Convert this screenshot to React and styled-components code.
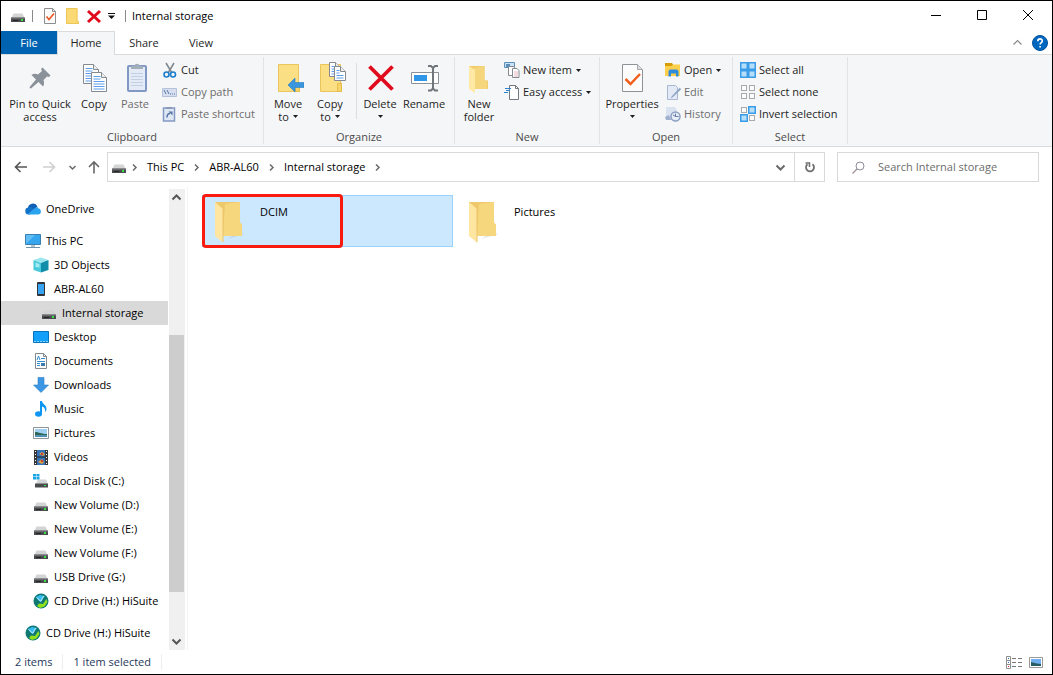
import React from "react";
import styled, { createGlobalStyle } from "styled-components";

const GlobalStyle = createGlobalStyle`
  * { box-sizing: border-box; }
  body { margin: 0; background: #fff; }
  body, button, input {
    font-family: "Open Sans", "Noto Sans", sans-serif;
    font-size: 12px;
    line-height: 16px;
    color: #000;
  }
  button { border: 0; padding: 0; background: none; white-space: nowrap; }
  ul { list-style: none; margin: 0; padding: 0; }
  svg { display: block; flex: none; }
`;

/* ---------- window frame ---------- */

const Window = styled.div`
  display: flex;
  flex-direction: column;
  min-height: 100vh;
  border: 1px solid #000;
  background: #fff;
`;

const TitleBar = styled.header`
  display: flex;
  align-items: center;
  height: 30px;
  padding: 0 1px 0 9px;
`;

const QuickButton = styled.button`
  display: flex;
  align-items: center;
  justify-content: center;
  width: ${(p) => (p.$narrow ? 14 : 22)}px;
  height: 22px;
`;

const Bar = styled.span`
  width: 1px;
  height: 12px;
  margin: 0 6px;
  background: #8a8a8a;
`;

const Title = styled.h1`
  flex: 1;
  margin: 0;
  font-size: 11px;
  font-weight: 400;
`;

const CaptionButton = styled.button`
  display: flex;
  align-items: center;
  justify-content: center;
  align-self: flex-start;
  width: 46px;
  height: 28px;
`;

const TabStrip = styled.nav`
  display: flex;
  height: 23px;
`;

const Tab = styled.button`
  width: ${(p) => (p.$wide ? 58 : 56)}px;
  height: ${(p) => (p.$active ? 24 : 23)}px;
  padding-bottom: ${(p) => (p.$active ? 2 : 0)}px;
  font-size: 11px;
  color: ${(p) => (p.$file ? "#fff" : "#262626")};
  background: ${(p) => (p.$file ? "#0063b1" : p.$active ? "#f5f6f7" : "transparent")};
  border: ${(p) => (p.$active ? "1px solid #dadbdc" : "0")};
  border-bottom: 0;
  position: relative;
`;

const TabTools = styled.div`
  display: flex;
  align-items: center;
  gap: 7px;
  margin-left: auto;
  padding-right: 4px;
`;

/* ---------- ribbon ---------- */

const Ribbon = styled.div`
  display: flex;
  height: 93px;
  background: #f5f6f7;
  border-top: 1px solid #dadbdc;
  border-bottom: 1px solid #dadbdc;
  padding: 2px 0;
`;

const Group = styled.section`
  display: flex;
  flex-direction: column;
  flex: none;
  width: ${(p) => p.$width}px;
  border-right: 1px solid #e2e3e4;
`;

const GroupBody = styled.div`
  display: flex;
  flex: 1;
  padding: 2px 0 0 3px;
`;

const GroupLabel = styled.h2`
  margin: 0;
  text-align: center;
  font-size: 11px;
  line-height: 14px;
  font-weight: 400;
  color: #4c4c4c;
`;

const BigButton = styled.button`
  display: flex;
  flex-direction: column;
  align-items: center;
  justify-content: flex-start;
  width: ${(p) => p.$width || 42}px;
  padding-top: 3px;
  font-size: 11px;
  line-height: 13px;
  color: ${(p) => (p.disabled ? "#6d6d6d" : "#1e1e1e")};
  svg + span { margin-top: 3px; }
`;

const Line = styled.span`
  display: flex;
  align-items: center;
  justify-content: center;
  gap: 4px;
  height: 13px;
`;

const SmallColumn = styled.div`
  display: flex;
  flex-direction: column;
`;

const SmallButton = styled.button`
  display: flex;
  align-items: center;
  gap: 3px;
  height: 22px;
  padding: 0 4px;
  font-size: 11px;
  color: ${(p) => (p.disabled ? "#6d6d6d" : "#1e1e1e")};
`;

const Divider = styled.span`
  width: 1px;
  height: 56px;
  margin: 4px 2px 0 5px;
  background: #dcdddf;
`;

/* ---------- address row ---------- */

const AddressRow = styled.div`
  display: flex;
  align-items: center;
  height: 40px;
  padding: 0 13px 0 6px;
`;

const NavButton = styled.button`
  display: flex;
  align-items: center;
  justify-content: center;
  width: ${(p) => p.$width || 28}px;
  height: 30px;
`;

const AddressBox = styled.div`
  display: flex;
  align-items: center;
  flex: 1;
  height: 30px;
  padding-left: 3px;
  border: 1px solid #d9d9d9;
`;

const Crumb = styled.button`
  padding: 0 5px;
  font-size: 11px;
`;

const Spacer = styled.span`
  flex: 1;
`;

const RefreshButton = styled(NavButton)`
  width: 30px;
  height: 28px;
  border-left: 1px solid #d9d9d9;
`;

const SearchBox = styled.label`
  display: flex;
  align-items: center;
  gap: 13px;
  flex: 0 1 202px;
  min-width: 0;
  height: 30px;
  margin-left: 12px;
  padding-left: 14px;
  border: 1px solid #d9d9d9;
`;

const SearchInput = styled.input`
  flex: 1;
  min-width: 0;
  border: 0;
  padding: 0;
  outline: 0;
  font-size: 11px;
  background: transparent;
  &::placeholder { color: #6d6d6d; opacity: 1; }
`;

/* ---------- body ---------- */

const Body = styled.div`
  display: flex;
  flex: 1;
`;

const Sidebar = styled.nav`
  width: 167px;
  padding: 10px 0 5px;
`;

const TreeItem = styled.li`
  margin-top: ${(p) => (p.$spaced ? 8 : 0)}px;
`;

const TreeLink = styled.a`
  display: flex;
  align-items: center;
  gap: 5px;
  height: 24px;
  padding-left: ${(p) => 24 + p.$depth * 8}px;
  font-size: 11px;
  white-space: nowrap;
  color: #000;
  text-decoration: none;
  background: ${(p) => (p.$selected ? "#d9d9d9" : "transparent")};
`;

const Scrollbar = styled.div`
  display: flex;
  flex-direction: column;
  width: 16px;
  margin: 2px 2px 0 1px;
  background: #f0f0f0;
`;

const ScrollButton = styled.button`
  display: flex;
  align-items: center;
  justify-content: center;
  height: 17px;
  padding-right: 1px;
`;

const Track = styled.div`
  flex: ${(p) => p.$share};
  margin-right: 1px;
  background: ${(p) => (p.$thumb ? "#cdcdcd" : "transparent")};
`;

const Files = styled.main`
  flex: 1;
  display: grid;
  grid-template-columns: repeat(auto-fill, 251px);
  grid-auto-rows: 52px;
  gap: 3px;
  padding: 8px 14px;
  border-left: 1px solid #f4f4f4;
`;

const Tile = styled.button`
  position: relative;
  display: flex;
  align-items: flex-start;
  gap: 15px;
  padding: 4px 0 0 10px;
  border: 1px solid ${(p) => (p.$selected ? "#99d1ff" : "transparent")};
  background: ${(p) => (p.$selected ? "#cce8ff" : "transparent")};
`;

const TileName = styled.span`
  margin-top: 4px;
  font-size: 11px;
`;

const Highlight = styled.span`
  position: absolute;
  left: -1px;
  top: -2px;
  width: 141px;
  height: 54px;
  border: 3px solid #f91a10;
  border-radius: 4px;
`;

/* ---------- status bar ---------- */

const StatusBar = styled.footer`
  display: flex;
  align-items: center;
  height: 24px;
  padding: 0 5px 0 14px;
  font-size: 11px;
  color: #1e395b;
`;

const StatusText = styled.span`
  padding-right: 10px;
  margin-right: 10px;
  border-right: 1px solid #eee;
`;

const ViewButton = styled.button`
  display: flex;
  align-items: center;
  justify-content: center;
  width: 22px;
  height: 20px;
`;

/* ---------- icons ---------- */

const Svg = ({ s = 16, w = s, h = s, children }) => (
  <svg width={w} height={h} viewBox={`0 0 ${w} ${h}`} fill="none" aria-hidden="true">
    {children}
  </svg>
);

const Caret = () => (
  <Svg w={5} h={3}><path d="M0 0h5L2.500 3z" fill="#1e1e1e" /></Svg>
);

const Chevron = ({ dir = "right", color = "#6a6a6a", size = 3, stroke = 1.5 }) => {
  const turn = { right: 0, down: 90, up: 270 }[dir];
  return (
    <Svg s={15}>
      <path
        d={`M${7.5 - size / 2} ${7.5 - size}l${size} ${size}l${-size} ${size}`}
        transform={`rotate(${turn} 7.5 7.5)`}
        stroke={color}
        strokeWidth={stroke}
      />
    </Svg>
  );
};

const DriveIcon = () => (
  <Svg>
    <path d="M3.500 5.500h9l2 4.500h-13z" fill="#d3d4d5" />
    <path d="M1 9.500h14v4.500H1z" fill="#4a4b4d" />
    <path d="M1 9.500h14v1H1z" fill="#88898b" />
    <path d="M3 12h5v1H3z" fill="#252628" />
    <path d="M11 11h2v2h-2z" fill="#35e04c" />
  </Svg>
);
const SystemDriveIcon = () => (
  <Svg>
    <path d="M5 6.500h8l2 4.500H3z" fill="#d3d4d5" />
    <path d="M2 10.500h13v4H2z" fill="#4a4b4d" />
    <path d="M11 12h2v1h-2z" fill="#35e04c" />
    <path d="M0 1h3v2.500H0zM3.500 1h3v2.500h-3zM0 4h3v2.500H0zM3.500 4h3v2.500h-3z" fill="#18a5e6" />
  </Svg>
);
const MiniProperties = () => (
  <Svg>
    <path d="M2.500 .5h8l3 3v12h-11z" fill="#fcfcfc" stroke="#8d8d8d" />
    <path d="M10.500 .5v3h3" stroke="#8d8d8d" />
    <path d="M4.500 8.500l2.500 3 5-6" stroke="#e8541d" strokeWidth="1.600" />
  </Svg>
);
const MiniFolder = () => (
  <Svg>
    <path d="M2 0h11.500v13h1v3H2z" fill="#fbd975" />
    <path d="M2.500 .5h10.500v13h1.500v2h-12z" stroke="#edc65a" />
  </Svg>
);
const MiniDelete = () => (
  <Svg><path d="M2 3l12 11M14 3L2 14" stroke="#e00b1c" strokeWidth="3" /></Svg>
);
const QuickMenuIcon = () => (
  <Svg w={8} h={6}><path d="M0 .5h7" stroke="#111" /><path d="M0 2.500h7L3.500 6z" fill="#111" /></Svg>
);

const PinIcon = () => (
  <Svg s={32}>
    <path d="M18.500 5.500l8 8-1.500 1.500-2-.5-3.500 3.500c1 2.500 .5 5-.5 6.500l-4.500-4.500L7 26.500l-1.500-.5 .5-1.500 6-7L7.500 13c2-1.500 4.500-1.500 6.500-.5l4-3.500-1-2z" fill="#8b929a" />
  </Svg>
);
const Page = ({ x, y, w, h, lines }) => (
  <g transform={`translate(${x} ${y})`}>
    <path d={`M.5 .5h${w - 6}l5 5v${h - 6}h${1 - w}z`} fill="#fff" stroke="#848a90" />
    <path d={`M${w - 5.5} .5v5h5`} fill="#eee" stroke="#848a90" />
    {Array.from({ length: lines }, (_, i) => (
      <path key={i} d={`M2.500 ${4.5 + i * 2.5}h${i < 2 ? w - 9 : w - 5}`} stroke="#5d9ce8" />
    ))}
  </g>
);
const CopyIcon = () => (
  <Svg s={32}>
    <Page x={5} y={2} w={16} h={20} lines={6} />
    <Page x={13} y={10} w={16} h={20} lines={6} />
  </Svg>
);
const PasteIcon = () => (
  <Svg s={32}>
    <rect x="9" y="4" width="18" height="25" rx="1" fill="#e4ebf6" stroke="#8098c4" strokeWidth="2" />
    <path d="M12 7V4h3.500c0-3 5-3 5 0H24v3z" fill="#a3aebb" />
    <path d="M12 11.500h12M12 14.500h12M12 17.500h12M12 20.500h12M12 23.500h12" stroke="#c3cfe3" />
  </Svg>
);
const CutIcon = () => (
  <Svg>
    <path d="M4 1l6 10M12 1L6 11" stroke="#7e868e" strokeWidth="1.500" />
    <circle cx="4.500" cy="12.500" r="2.500" stroke="#1c7fce" strokeWidth="1.600" />
    <circle cx="11" cy="12.500" r="2.500" stroke="#1c7fce" strokeWidth="1.600" />
  </Svg>
);
const CopyPathIcon = () => (
  <Svg>
    <path d="M.5 4.500h14v8H.5z" fill="#d6dff0" stroke="#b4c1d9" />
    <path d="M2 6l2 4M5 6l2 4M8 10h1M10 10h1M12 10h1" stroke="#5b76a6" />
  </Svg>
);
const PasteShortcutIcon = () => (
  <Svg>
    <rect x="1.500" y="2" width="11" height="13" fill="#dfe7f4" stroke="#8299c3" strokeWidth="1.500" />
    <path d="M4 3V1h6v2z" fill="#8b9bb5" />
    <path d="M5 11.500c0-3 1-4 3-4" stroke="#5673a8" strokeWidth="1.500" />
    <path d="M6.500 5.500h4v4z" fill="#5673a8" />
  </Svg>
);
const FolderBack = () => (
  <>
    <path d="M6.500 2.500h20v18.500h1v8.500h-21z" fill="#fbdf84" stroke="#eac55b" />
    <path d="M23.500 21.500h4v8h-4z" fill="#f7d36c" stroke="#e5bd4c" />
  </>
);
const MoveIcon = () => (
  <Svg s={32}>
    <FolderBack />
    <path d="M16 23l7-7v4.500h9v5h-9V30z" fill="#3a96dd" stroke="#2a80c4" strokeWidth=".6" />
  </Svg>
);
const CopyToIcon = () => (
  <Svg s={32}>
    <FolderBack />
    <Page x={15} y={0} w={12} h={15} lines={4} />
    <Page x={20} y={4} w={12} h={15} lines={4} />
  </Svg>
);
const DeleteIcon = () => (
  <Svg s={32}><path d="M5.500 4.500l23 23M28.500 4.500l-23 23" stroke="#e00b1c" strokeWidth="3.800" /></Svg>
);
const RenameIcon = () => (
  <Svg s={32}>
    <path d="M3.500 10.500h27v11h-27z" fill="#fff" stroke="#8b9197" />
    <path d="M6 13h13v6H6z" fill="#3096e8" />
    <path d="M20 4h3l2 2 2-2h3M20 28.500h3l2-2 2 2h3M25 5v22" stroke="#70767b" strokeWidth="2" />
  </Svg>
);
const NewFolderIcon = () => (
  <Svg s={32}>
    <path d="M6 4h15.500v14.500H25V27H10z" fill="#f0cb68" />
    <path d="M10 6l11.500-2v14.500H24V27H11z" fill="#f6d67c" />
    <path d="M6 4l6 4v23l-6-4z" fill="#ffe9a4" />
  </Svg>
);
const NewItemIcon = () => (
  <Svg>
    <path d="M.5 .5h10v5H.5z" fill="#cbe2f5" stroke="#5b90bb" />
    <path d="M2 2h4v3H2z" fill="#5a8dbc" />
    <path d="M4.500 4.500h6v9h-6z" fill="#fff" stroke="#848a90" />
    <path d="M8.500 6.500h4.500l2 2v7h-6.500z" fill="#fff" stroke="#848a90" />
    <path d="M10 10h4M10 12h4M10 14h4" stroke="#e3a3a8" strokeWidth=".8" />
  </Svg>
);
const EasyAccessIcon = () => (
  <Svg>
    <path d="M5.500 1.500h6l3 3v11h-9z" fill="#fff" stroke="#73797f" />
    <path d="M11.500 1.500v3h3" stroke="#73797f" />
    <path d="M1 4.500h6M2 6.500h4M0 8.500h4" stroke="#2b82cf" />
  </Svg>
);
const PropertiesIcon = () => (
  <Svg s={32}>
    <path d="M6.500 2.500h15l5 5v22h-20z" fill="#fcfcfc" stroke="#8e9398" />
    <path d="M21.500 2.500v5h5" fill="#ddd" stroke="#a4a8ac" />
    <path d="M9.500 17l5 5L24 12" stroke="#f0601c" strokeWidth="2.500" />
  </Svg>
);
const OpenIcon = () => (
  <Svg>
    <path d="M0 1h6.500l1 1.500H15V14H0z" fill="#fbce4b" />
    <path d="M0 1h7l1 1.500L6.500 4H0z" fill="#d69d0a" />
    <path d="M3.500 14.500V9l1.500-1.500h7L13.500 9v5.500H11v-3H6v3z" fill="#2f8bdc" />
  </Svg>
);
const EditIcon = () => (
  <Svg>
    <path d="M2.500 1.500h8l2 2v12h-10z" fill="#e3eaf5" stroke="#a9b8d1" />
    <path d="M15 3.500L7 12l-1.500 2.500L8 13l8-7.500z" fill="#8fa3c5" />
  </Svg>
);
const HistoryIcon = () => (
  <Svg>
    <path d="M1 1h9l2 3v10H1z" fill="#dbe3f0" />
    <path d="M0 11l4-2 2 5H1z" fill="#a0b2cf" />
    <circle cx="10.500" cy="10.500" r="4.500" fill="#e8eef7" stroke="#8da0c2" strokeWidth="1.500" />
    <path d="M10.500 7.500v3h3M8 9l2.500 1.500" stroke="#667da8" />
  </Svg>
);
const SelectIcon = ({ on }) => (
  <Svg>
    {[[0, 0], [8, 0], [0, 8], [8, 8]].map(([x, y], i) =>
      on[i] ? (
        <rect key={i} x={x + 0.75} y={y + 0.75} width="6.500" height="6.500" fill="#b5defb" stroke="#3a9be6" strokeWidth="1.500" />
      ) : (
        <rect key={i} x={x + 1.5} y={y + 1.5} width="5" height="5" fill="#fcfcfc" stroke="#a8abae" />
      )
    )}
  </Svg>
);

const BackIcon = ({ color, flip }) => (
  <Svg s={14}>
    <path d="M13 7H1.500M6.500 2l-5 5 5 5" stroke={color} strokeWidth="1.600" transform={flip ? "matrix(-1 0 0 1 14 0)" : undefined} />
  </Svg>
);
const UpIcon = () => (
  <Svg s={14}><path d="M7 13.500V2M2 7l5-5 5 5" stroke="#686868" strokeWidth="1.600" /></Svg>
);
const RefreshIcon = () => (
  <Svg s={14}>
    <path d="M9.500 4.200A4 4 0 1 1 4.500 4.200" stroke="#707070" strokeWidth="1.800" />
    <path d="M2.500 3H6.500V7" stroke="#707070" strokeWidth="1.600" />
  </Svg>
);
const SearchIcon = () => (
  <Svg s={13}><circle cx="8" cy="5" r="4" stroke="#8b8b99" /><path d="M5 8l-4.500 4.500" stroke="#a18f93" strokeWidth="1.200" /></Svg>
);

const CloudIcon = () => (
  <Svg>
    <path d="M3 8a5 5 0 0 1 9.500-2.500L7 10z" fill="#0f5fb4" />
    <path d="M4 6.500c2-1 3 0 4.500 1L5 13.500H3.500a3.400 3.400 0 0 1 .5-7z" fill="#1273c9" />
    <path d="M3 13l6-5c1.500-2 4-2.500 4.500-.5 3.500 .5 3 6-.5 6H4z" fill="#2ba3ef" />
  </Svg>
);
const PcIcon = () => (
  <Svg>
    <path d="M.5 1.500h15v10H.5z" fill="#62bdf5" stroke="#3a7fae" />
    <path d="M1 11l9-9h5v9z" fill="#35a5ee" />
    <path d="M6 12h4v2H6z" fill="#b5c5d0" />
    <path d="M1 14.500h14" stroke="#6f93aa" />
  </Svg>
);
const CubeIcon = () => (
  <Svg>
    <path d="M8 .5l7.500 2.500L8 6 .5 3z" fill="#9be7ef" />
    <path d="M.5 3L8 6v9.500L.5 13z" fill="#48c9dc" />
    <path d="M15.500 3L8 6v9.500l7.500-2.500z" fill="#118ca9" />
    <path d="M2.500 5.500l4 1.500v3.500L2.500 10z" fill="#a5ebf2" />
  </Svg>
);
const PhoneIcon = () => (
  <Svg><rect x="4" y="1" width="8" height="14" rx="1" fill="#303438" /><path d="M5 3h6v10H5z" fill="#38a3f1" /></Svg>
);
const DesktopIcon = () => (
  <Svg><path d="M.5 2.500h15v11H.5z" fill="#12a0fb" stroke="#0873be" /><path d="M1 12.500h14" stroke="#85d1ff" strokeDasharray="2 1" /></Svg>
);
const DocumentIcon = () => (
  <Svg>
    <path d="M2.500 .5h8l3 3v12h-11z" fill="#fff" stroke="#82888d" />
    <path d="M10.500 .5v3h3" stroke="#82888d" />
    <path d="M4 7l1.500-4L7 7M8 5.500h4M4 8.500h8M4 10.500h3M4 12.500h3" stroke="#338cd0" />
    <path d="M8 10h4v3H8z" fill="#3a7ab0" />
  </Svg>
);
const DownloadIcon = () => (
  <Svg><path d="M5 .5h6V8h4.500L8 15.500 .5 8H5z" fill="#3b97e3" stroke="#2b80c9" strokeWidth=".6" /></Svg>
);
const MusicIcon = () => (
  <Svg>
    <ellipse cx="5.500" cy="13" rx="3.500" ry="2.800" fill="#0d97f2" />
    <path d="M7 0h2c0 3 5 4 4.500 8.500-.3 1-.8 2-1.500 2.500 .5-3-.5-4.500-3-5.500V13H7z" fill="#0d97f2" />
  </Svg>
);
const PictureIcon = () => (
  <Svg>
    <path d="M.5 2.500h15v11H.5z" fill="#fff" stroke="#8e9499" />
    <path d="M2 4h12v8H2z" fill="#9ecff1" />
    <path d="M2 7c4 0 6 2 12 2v1.500H2z" fill="#2d6558" />
    <path d="M2 10.500h12V12H2z" fill="#4b8bb8" />
  </Svg>
);
const VideoIcon = () => (
  <Svg>
    <path d="M1 1h14v15H1z" fill="#373737" />
    <path d="M4 1h8v15H4z" fill="#3572b7" />
    <path d="M2 2h1v1H2zm0 3h1v1H2zm0 3h1v1H2zm0 3h1v1H2zm0 3h1v1H2zM13 2h1v1h-1zm0 3h1v1h-1zm0 3h1v1h-1zm0 3h1v1h-1zm0 3h1v1h-1z" fill="#fff" />
    <path d="M4 8h8" stroke="#222" />
    <path d="M6 5l3-2 3 2-2 2zM5 13l4-3 2 3-2 2z" fill="#e1a13c" />
    <path d="M8 4h2v2H8zM8 11h2v2H8z" fill="#c74434" />
  </Svg>
);
const DiscIcon = () => (
  <Svg>
    <circle cx="8" cy="8" r="7.500" fill="#107a72" />
    <path d="M3 4l4-2 5 1-2 2.500L8 9 6 8z" fill="#35b9f1" />
    <path d="M13.500 6l1 3-3 4.500-4.500 1.500-3-2 2-2.500 4 .5z" fill="#8fe01c" />
    <path d="M3.500 4.500l4.500 4M10.500 3L8 8" stroke="#c4effb" />
  </Svg>
);

const FolderIcon = () => (
  <Svg w={32} h={44}>
    <path d="M26 32l5 2-17 5z" fill="#b4b7b5" opacity=".4" />
    <path d="M2 2h25v20.500l2 2.500V36H9z" fill="#eec96b" />
    <path d="M12 4l15-2v20.500l2 2.500v11H10z" fill="#f7d77e" />
    <path d="M2 2l8 7v33.500L2 36z" fill="#ffe6a0" />
    <path d="M10 9v33" stroke="#e9c56c" />
  </Svg>
);

/* ---------- data ---------- */

const tree = [
  ["OneDrive", CloudIcon, 0],
  ["This PC", PcIcon, 0, true],
  ["3D Objects", CubeIcon, 1],
  ["ABR-AL60", PhoneIcon, 1],
  ["Internal storage", DriveIcon, 2],
  ["Desktop", DesktopIcon, 1],
  ["Documents", DocumentIcon, 1],
  ["Downloads", DownloadIcon, 1],
  ["Music", MusicIcon, 1],
  ["Pictures", PictureIcon, 1],
  ["Videos", VideoIcon, 1],
  ["Local Disk (C:)", SystemDriveIcon, 1],
  ["New Volume (D:)", DriveIcon, 1],
  ["New Volume (E:)", DriveIcon, 1],
  ["New Volume (F:)", DriveIcon, 1],
  ["USB Drive (G:)", DriveIcon, 1],
  ["CD Drive (H:) HiSuite", DiscIcon, 1],
  ["CD Drive (H:) HiSuite", DiscIcon, 0, true],
];

const Big = ({ icon, lines, menu, ...rest }) => (
  <BigButton {...rest}>
    {icon}
    {lines.map((text, i) => (
      <Line key={i}>
        {text}
        {menu && i === lines.length - 1 && <Caret />}
      </Line>
    ))}
  </BigButton>
);

const Small = ({ icon, text, menu, ...rest }) => (
  <SmallButton {...rest}>
    {icon}
    <Line>
      {text}
      {menu && <Caret />}
    </Line>
  </SmallButton>
);

const RibbonGroup = ({ label, width, children }) => (
  <Group $width={width}>
    <GroupBody>{children}</GroupBody>
    <GroupLabel>{label}</GroupLabel>
  </Group>
);

export default function App() {
  return (
    <Window>
      <GlobalStyle />
      <TitleBar>
        <DriveIcon />
        <Bar />
        <QuickButton aria-label="Properties"><MiniProperties /></QuickButton>
        <QuickButton aria-label="New folder"><MiniFolder /></QuickButton>
        <QuickButton aria-label="Delete"><MiniDelete /></QuickButton>
        <QuickButton $narrow aria-label="Customize toolbar"><QuickMenuIcon /></QuickButton>
        <Bar />
        <Title>Internal storage</Title>
        <CaptionButton aria-label="Minimize"><Svg s={10}><path d="M0 5.500h10" stroke="#000" /></Svg></CaptionButton>
        <CaptionButton aria-label="Maximize"><Svg s={10}><path d="M.5 .5h9v9h-9z" stroke="#000" /></Svg></CaptionButton>
        <CaptionButton aria-label="Close"><Svg s={10}><path d="M0 0l10 10M10 0L0 10" stroke="#000" /></Svg></CaptionButton>
      </TitleBar>
      <TabStrip>
        <Tab $file>File</Tab>
        <Tab $wide $active>Home</Tab>
        <Tab $wide>Share</Tab>
        <Tab>View</Tab>
        <TabTools>
          <button aria-label="Collapse ribbon"><Chevron dir="up" size={4} stroke={1.2} color="#8a8a8a" /></button>
          <button aria-label="Help">
            <Svg>
              <circle cx="8" cy="8" r="7.500" fill="#0067bf" stroke="#00519c" />
              <path d="M5.800 6.200c0-3 4.500-3 4.500-.3 0 1.600-2.200 1.700-2.200 3.600M8.100 11v1.500" stroke="#fff" strokeWidth="1.600" />
            </Svg>
          </button>
        </TabTools>
      </TabStrip>
      <Ribbon>
        <RibbonGroup label="Clipboard" width={263}>
          <Big $width={72} icon={<PinIcon />} lines={["Pin to Quick", "access"]} />
          <Big $width={36} icon={<CopyIcon />} lines={["Copy"]} />
          <Big $width={46} icon={<PasteIcon />} lines={["Paste"]} disabled />
          <SmallColumn>
            <Small icon={<CutIcon />} text="Cut" />
            <Small icon={<CopyPathIcon />} text="Copy path" disabled />
            <Small icon={<PasteShortcutIcon />} text="Paste shortcut" disabled />
          </SmallColumn>
        </RibbonGroup>
        <RibbonGroup label="Organize" width={191}>
          <Big icon={<MoveIcon />} lines={["Move", "to"]} menu />
          <Big icon={<CopyToIcon />} lines={["Copy", "to"]} menu />
          <Divider />
          <Big icon={<DeleteIcon />} lines={["Delete", ""]} menu />
          <Big $width={46} icon={<RenameIcon />} lines={["Rename"]} />
        </RibbonGroup>
        <RibbonGroup label="New" width={145}>
          <Big icon={<NewFolderIcon />} lines={["New", "folder"]} />
          <SmallColumn>
            <Small icon={<NewItemIcon />} text="New item" menu />
            <Small icon={<EasyAccessIcon />} text="Easy access" menu />
          </SmallColumn>
        </RibbonGroup>
        <RibbonGroup label="Open" width={133}>
          <Big $width={58} icon={<PropertiesIcon />} lines={["Properties", ""]} menu />
          <SmallColumn>
            <Small icon={<OpenIcon />} text="Open" menu />
            <Small icon={<EditIcon />} text="Edit" disabled />
            <Small icon={<HistoryIcon />} text="History" disabled />
          </SmallColumn>
        </RibbonGroup>
        <RibbonGroup label="Select" width={115}>
          <SmallColumn>
            <Small icon={<SelectIcon on={[1, 1, 1, 1]} />} text="Select all" />
            <Small icon={<SelectIcon on={[0, 0, 0, 0]} />} text="Select none" />
            <Small icon={<SelectIcon on={[0, 1, 1, 0]} />} text="Invert selection" />
          </SmallColumn>
        </RibbonGroup>
      </Ribbon>
      <AddressRow>
        <NavButton aria-label="Back"><BackIcon color="#555" /></NavButton>
        <NavButton aria-label="Forward" disabled><BackIcon color="#d0d0d0" flip /></NavButton>
        <NavButton $width={18} aria-label="Recent locations"><Chevron dir="down" /></NavButton>
        <NavButton $width={26} aria-label="Up"><UpIcon /></NavButton>
        <AddressBox>
          <DriveIcon />
          <Chevron />
          {["This PC", "ABR-AL60", "Internal storage"].map((name) => (
            <React.Fragment key={name}>
              <Crumb>{name}</Crumb>
              <Chevron />
            </React.Fragment>
          ))}
          <Spacer />
          <NavButton aria-label="Previous locations"><Chevron dir="down" size={4} stroke={2} /></NavButton>
          <RefreshButton aria-label="Refresh"><RefreshIcon /></RefreshButton>
        </AddressBox>
        <SearchBox>
          <SearchIcon />
          <SearchInput type="search" aria-label="Search Internal storage" placeholder="Search Internal storage" />
        </SearchBox>
      </AddressRow>
      <Body>
        <Sidebar>
          <ul>
            {tree.map(([name, Icon, depth, spaced], i) => (
              <TreeItem key={i} $spaced={spaced}>
                <TreeLink href="#" $depth={depth} $selected={name === "Internal storage"}>
                  <Icon />
                  {name}
                </TreeLink>
              </TreeItem>
            ))}
          </ul>
        </Sidebar>
        <Scrollbar>
          <ScrollButton aria-label="Scroll up"><Chevron dir="up" size={4} stroke={2} color="#555" /></ScrollButton>
          <Track $share={129} />
          <Track $share={257} $thumb />
          <Track $share={41} />
          <ScrollButton aria-label="Scroll down"><Chevron dir="down" size={4} stroke={2} color="#555" /></ScrollButton>
        </Scrollbar>
        <Files>
          <Tile $selected>
            <FolderIcon />
            <TileName>DCIM</TileName>
            <Highlight />
          </Tile>
          <Tile>
            <FolderIcon />
            <TileName>Pictures</TileName>
          </Tile>
        </Files>
      </Body>
      <StatusBar>
        <StatusText>2 items</StatusText>
        <StatusText>1 item selected</StatusText>
        <Spacer />
        <ViewButton aria-label="Details view">
          <Svg>
            <path d="M.5 2.500h4v4h-4zM.5 6.500h4v4h-4zM.5 10.500h4v4h-4z" fill="#fff" stroke="#8e8e8e" />
            <path d="M2 4h1v1H2zM2 8h1v1H2z" fill="#2774c5" />
            <path d="M2 12h1v1H2z" fill="#d22" />
            <path d="M6 4.500h4M12 4.500h4M6 8.500h4M12 8.500h4M6 12.500h4M12 12.500h4" stroke="#777" />
          </Svg>
        </ViewButton>
        <ViewButton aria-label="Large icons view">
          <Svg>
            <path d="M1.500 3.500h13v10h-13z" fill="#fff" stroke="#999" />
            <path d="M3 5h10v7H3z" fill="#72aff0" />
            <path d="M3 8l6 1.500 4 .5v2H3z" fill="#285f65" />
          </Svg>
        </ViewButton>
      </StatusBar>
    </Window>
  );
}
